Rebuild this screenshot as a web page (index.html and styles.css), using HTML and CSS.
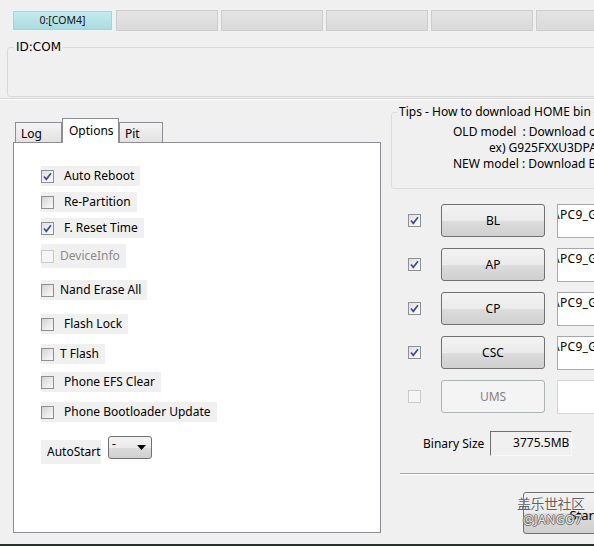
FILE: index.html
```html
<!DOCTYPE html>
<html>
<head>
<meta charset="utf-8">
<link rel="stylesheet" href="styles.css">
</head>
<body>
<div class="window">
  <div class="slots">
    <div class="slot active">0:[COM4]</div>
    <div class="slot"></div>
    <div class="slot"></div>
    <div class="slot"></div>
    <div class="slot"></div>
    <div class="slot"></div>
  </div>
  <fieldset class="idbox"><legend>ID:COM</legend><div class="idbody"></div></fieldset>
  <div class="sep"></div>
  <div class="main">
    <div class="left">
      <div class="tabs">
        <div class="tab">Log</div>
        <div class="tab sel">Options</div>
        <div class="tab">Pit</div>
      </div>
      <div class="panel">
        <div class="opt"><span class="cb on"><svg viewBox="0 0 11 11" width="11" height="11"><path d="M2 5.5 L4.3 8.3 L9 2.2" fill="none" stroke="#3d4f8a" stroke-width="1.7"/></svg></span><span class="lbl">Auto Reboot</span></div>
        <div class="opt m6"><span class="cb"></span><span class="lbl">Re-Partition</span></div>
        <div class="opt m6"><span class="cb on"><svg viewBox="0 0 11 11" width="11" height="11"><path d="M2 5.5 L4.3 8.3 L9 2.2" fill="none" stroke="#3d4f8a" stroke-width="1.7"/></svg></span><span class="lbl">F. Reset Time</span></div>
        <div class="opt m6 tall disabled"><span class="cb"></span><span class="lbl tight">DeviceInfo</span></div>
        <div class="opt m12"><span class="cb"></span><span class="lbl tight">Nand Erase All</span></div>
        <div class="opt m14"><span class="cb"></span><span class="lbl">Flash Lock</span></div>
        <div class="opt m10"><span class="cb"></span><span class="lbl tight">T Flash</span></div>
        <div class="opt m8"><span class="cb"></span><span class="lbl">Phone EFS Clear</span></div>
        <div class="opt m10"><span class="cb"></span><span class="lbl">Phone Bootloader Update</span></div>
        <div class="autostart m14">
          <span class="aslabel">AutoStart</span>
          <span class="combo"><span class="cval">-</span><svg class="arrow" viewBox="0 0 9 5" width="9" height="5"><path d="M0 0 H9 L4.5 5 Z" fill="#000"/></svg></span>
        </div>
      </div>
    </div>
    <div class="right">
      <fieldset class="tips">
        <legend>Tips - How to download HOME bin</legend>
        <div class="tlines">
          <div class="tl">OLD model &nbsp;: Download one binary &nbsp;&nbsp;"BL_XXXX.tar.md5"</div>
          <div class="tl ex">ex) G925FXXU3DPA5_G925FOXA3DPA1_HOME.tar.md5</div>
          <div class="tl">NEW model : Download BL + AP + CP + HOME_CSC</div>
        </div>
      </fieldset>
      <div class="files">
        <div class="frow">
          <span class="cb on"><svg viewBox="0 0 11 11" width="11" height="11"><path d="M2 5.5 L4.3 8.3 L9 2.2" fill="none" stroke="#3d4f8a" stroke-width="1.7"/></svg></span>
          <button class="fbtn">BL</button>
          <div class="ffield"><span class="fpath">APC9_G925FXXU3DPC9_CL7891234_QB9876543_REV00_user_low_ship.tar.md5</span></div>
        </div>
        <div class="frow">
          <span class="cb on"><svg viewBox="0 0 11 11" width="11" height="11"><path d="M2 5.5 L4.3 8.3 L9 2.2" fill="none" stroke="#3d4f8a" stroke-width="1.7"/></svg></span>
          <button class="fbtn">AP</button>
          <div class="ffield"><span class="fpath">APC9_G925FXXU3DPC9_CL7891234_QB9876543_REV00_user_low_ship.tar.md5</span></div>
        </div>
        <div class="frow">
          <span class="cb on"><svg viewBox="0 0 11 11" width="11" height="11"><path d="M2 5.5 L4.3 8.3 L9 2.2" fill="none" stroke="#3d4f8a" stroke-width="1.7"/></svg></span>
          <button class="fbtn">CP</button>
          <div class="ffield"><span class="fpath">APC9_G925FXXU3DPC9_CL7891234_QB9876543_REV00_user_low_ship.tar.md5</span></div>
        </div>
        <div class="frow">
          <span class="cb on"><svg viewBox="0 0 11 11" width="11" height="11"><path d="M2 5.5 L4.3 8.3 L9 2.2" fill="none" stroke="#3d4f8a" stroke-width="1.7"/></svg></span>
          <button class="fbtn">CSC</button>
          <div class="ffield"><span class="fpath">APC9_G925FXXU3DPC9_CL7891234_QB9876543_REV00_user_low_ship.tar.md5</span></div>
        </div>
        <div class="frow">
          <span class="cb dis"></span>
          <button class="fbtn dis">UMS</button>
          <div class="ffield dis"></div>
        </div>
      </div>
      <div class="binrow">
        <span class="binlabel">Binary Size</span>
        <span class="binbox">3775.5MB</span>
      </div>
      <div class="sep2"></div>
      <div class="actions">
        <button class="start">Start</button>
        <div class="watermark">
          <div class="wm1">盖乐世社区</div>
          <div class="wm2">@JANGO7</div>
        </div>
      </div>
    </div>
  </div>
  <div class="taskbar"></div>
</div>
</body>
</html>
```

FILE: styles.css
```css
* { box-sizing: border-box; }
html, body {
  margin: 0;
  padding: 0;
  width: 594px;
  height: 546px;
  overflow: hidden;
  background: #f0f0f0;
}
body {
  font-family: "Noto Sans", "DejaVu Sans", sans-serif;
  font-size: 12px;
  color: #000;
}
.window {
  width: 594px;
  height: 546px;
  display: flex;
  flex-direction: column;
  overflow: hidden;
}

/* port slots */
.slots {
  display: flex;
  gap: 3px;
  padding: 10px 0 0 12px;
  flex: none;
}
.slot {
  flex: none;
  width: 102px;
  height: 21px;
  border: 1px solid #cdcdcd;
  background: linear-gradient(#e4e4e4, #dadada);
}
.slot.active {
  width: 101px;
  border: 1px solid #e8f6f7;
  outline: 1px solid #a9d2d6;
  outline-offset: -2px;
  background: linear-gradient(#c6ecee, #a9dadd);
  font-size: 10.5px;
  line-height: 19px;
  text-align: center;
  color: #111;
}

/* ID group */
.idbox {
  margin: 9px 0 0 7px;
  padding: 0;
  border: 1px solid #d9d9d9;
  border-radius: 3px;
  width: 600px;
  flex: none;
}
.idbox legend {
  font-family: "DejaVu Sans", sans-serif;
  font-size: 12px;
  line-height: 14px;
  padding: 0 2px;
  margin-left: 6px;
  color: #000;
}
.idbody { height: 42px; }

.sep {
  flex: none;
  margin-top: 1px;
  height: 2px;
  border-top: 1px solid #d4d4d4;
  border-bottom: 1px solid #ffffff;
}

/* main area */
.main {
  flex: none;
  display: flex;
  gap: 9px;
}
.left {
  flex: none;
  width: 368px;
  margin: 18px 0 0 13px;
}
.tabs {
  display: flex;
  align-items: flex-end;
  height: 24px;
  padding-left: 2px;
}
.tab {
  height: 20px;
  border: 1px solid #8c8e94;
  border-bottom: none;
  background: linear-gradient(#f4f4f4, #e2e2e2);
  padding: 3px 0 0 5px;
  line-height: 16px;
  width: 47px;
}
.tab + .tab { border-left: none; }
.tab.sel {
  width: 57px;
  height: 25px;
  margin-bottom: -1px;
  background: #fff;
  padding: 4px 0 0 6px;
  border-left: 1px solid #8c8e94;
  position: relative;
  z-index: 1;
}
.tab.sel + .tab { width: 44px; border-left: 1px solid #8c8e94; }
.panel {
  height: 391px;
  border: 1px solid #8c8e94;
  background: #fff;
  padding: 23px 0 0 27px;
  display: flex;
  flex-direction: column;
  align-items: flex-start;
}
.opt {
  display: flex;
  align-items: center;
  height: 20px;
  background: #f0f0f0;
  padding-right: 6px;
}
.opt.tall { height: 24px; }
.m6 { margin-top: 6px; }
.m8 { margin-top: 8px; }
.m10 { margin-top: 10px; }
.m12 { margin-top: 12px; }
.m14 { margin-top: 14px; }

.cb {
  flex: none;
  width: 13px;
  height: 13px;
  border: 1px solid #8e8f8f;
  background: linear-gradient(135deg, #d2d2d2 0%, #ececec 60%, #f8f8f8 100%);
  display: flex;
  align-items: center;
  justify-content: center;
}
.cb.on {
  background: linear-gradient(135deg, #dcdde6 0%, #f2f2f7 60%, #fbfbfd 100%);
}
.cb svg { display: block; }
.opt.disabled .cb, .cb.dis {
  border-color: #c9c9c9;
  background: #f5f5f5;
}
.lbl {
  margin-left: 10px;
  line-height: 16px;
  white-space: nowrap;
}
.lbl.tight { margin-left: 6px; }
.opt.disabled .lbl { color: #8b8b8b; }

.autostart {
  display: flex;
  align-items: flex-start;
  height: 28px;
}
.aslabel {
  margin-top: 4px;
  height: 24px;
  line-height: 24px;
  background: #f0f0f0;
  padding: 0 0 0 6px;
  width: 60px;
}
.combo {
  margin-left: 7px;
  width: 44px;
  height: 23px;
  border: 1px solid #707070;
  border-radius: 3px;
  background: linear-gradient(#f3f3f3 0%, #ebebeb 50%, #dcdcdc 51%, #d0d0d0 100%);
  display: flex;
  align-items: flex-start;
  padding: 0 0 0 3px;
}
.cval {
  line-height: 14px;
  font-size: 12px;
}
.arrow {
  margin: 8px 0 0 21px;
  display: block;
}

/* right column */
.right {
  flex: none;
  width: 204px;
  overflow: hidden;
  margin-top: 5px;
  display: flex;
  flex-direction: column;
}
.tips {
  margin: 0 0 0 1px;
  padding: 0 0 16px 0;
  width: 320px;
  border: 1px solid #dcdcdc;
  border-radius: 3px;
}
.tips legend {
  font-size: 12px;
  line-height: 14px;
  padding: 0 2px;
  margin-left: 5px;
  white-space: nowrap;
}
.tlines {
  padding: 5px 0 0 61px;
}
.tl {
  line-height: 16px;
  white-space: nowrap;
}
.tl.ex { padding-left: 36px; }

.files {
  margin-top: 15px;
  display: flex;
  flex-direction: column;
  gap: 11px;
}
.frow {
  display: flex;
  align-items: center;
  height: 33px;
  padding-left: 18px;
}
.fbtn {
  flex: none;
  margin-left: 20px;
  width: 104px;
  height: 33px;
  border: 1px solid #707070;
  border-radius: 3px;
  background: linear-gradient(#f2f2f2 0%, #ebebeb 50%, #dddddd 51%, #cfcfcf 100%);
  font-family: "Noto Sans", sans-serif;
  font-size: 12px;
  color: #000;
  padding: 0;
}
.fbtn.dis {
  border-color: #adb2b5;
  background: #f4f4f4;
  color: #838383;
}
.ffield {
  flex: none;
  margin-left: 12px;
  width: 120px;
  height: 34px;
  border: 1px solid #abadb3;
  border-top-color: #a4a6ab;
  background: #fff;
  overflow: hidden;
  padding: 2px 0 0 0;
  white-space: nowrap;
}
.ffield.dis { border-color: #d5d5d5; background: #fff; }
.fpath {
  display: block;
  margin-left: -6px;
  line-height: 16px;
  letter-spacing: 0.3px;
}

.binrow {
  margin-top: 18px;
  display: flex;
  align-items: center;
  height: 25px;
  padding-left: 33px;
}
.binlabel { white-space: nowrap; }
.binbox {
  margin-left: 6px;
  width: 82px;
  height: 25px;
  border: 1px solid #f8f8f8;
  border-top-color: #6f6f6f;
  border-left-color: #6f6f6f;
  background: #f0f0f0;
  text-align: right;
  padding-right: 2px;
  line-height: 22px;
}
.sep2 {
  margin: 17px 0 0 10px;
  height: 2px;
  border-top: 1px solid #a7a7a7;
  border-bottom: 1px solid #ffffff;
  flex: none;
}
.actions {
  position: relative;
  margin-top: 17px;
  padding-left: 133px;
  height: 42px;
}
.start {
  width: 122px;
  height: 42px;
  border: 1px solid #707070;
  border-radius: 3px;
  background: linear-gradient(#f2f2f2 0%, #ebebeb 50%, #dddddd 51%, #cfcfcf 100%);
  font-family: "Noto Sans", sans-serif;
  font-size: 13px;
  padding: 4px 0 0 0;
  color: #000;
}
.watermark {
  position: absolute;
  left: 127px;
  top: 3px;
  pointer-events: none;
}
.wm1 {
  font-family: "Noto Sans CJK SC", sans-serif;
  font-size: 14px;
  line-height: 16px;
  color: rgba(70, 70, 70, 0.85);
  text-shadow: 0 0 1px #fff;
  letter-spacing: -0.5px;
}
.wm2 {
  margin: 2px 0 0 6px;
  font-family: "Noto Sans", sans-serif;
  font-size: 12px;
  line-height: 14px;
  color: #e6e6e6;
  text-shadow: -1px 0 0 #777, 1px 0 0 #777, 0 -1px 0 #777, 0 1px 0 #777;
  letter-spacing: 0.5px;
}

.taskbar {
  margin-top: auto;
  height: 2px;
  background: #263326;
  flex: none;
}
```
